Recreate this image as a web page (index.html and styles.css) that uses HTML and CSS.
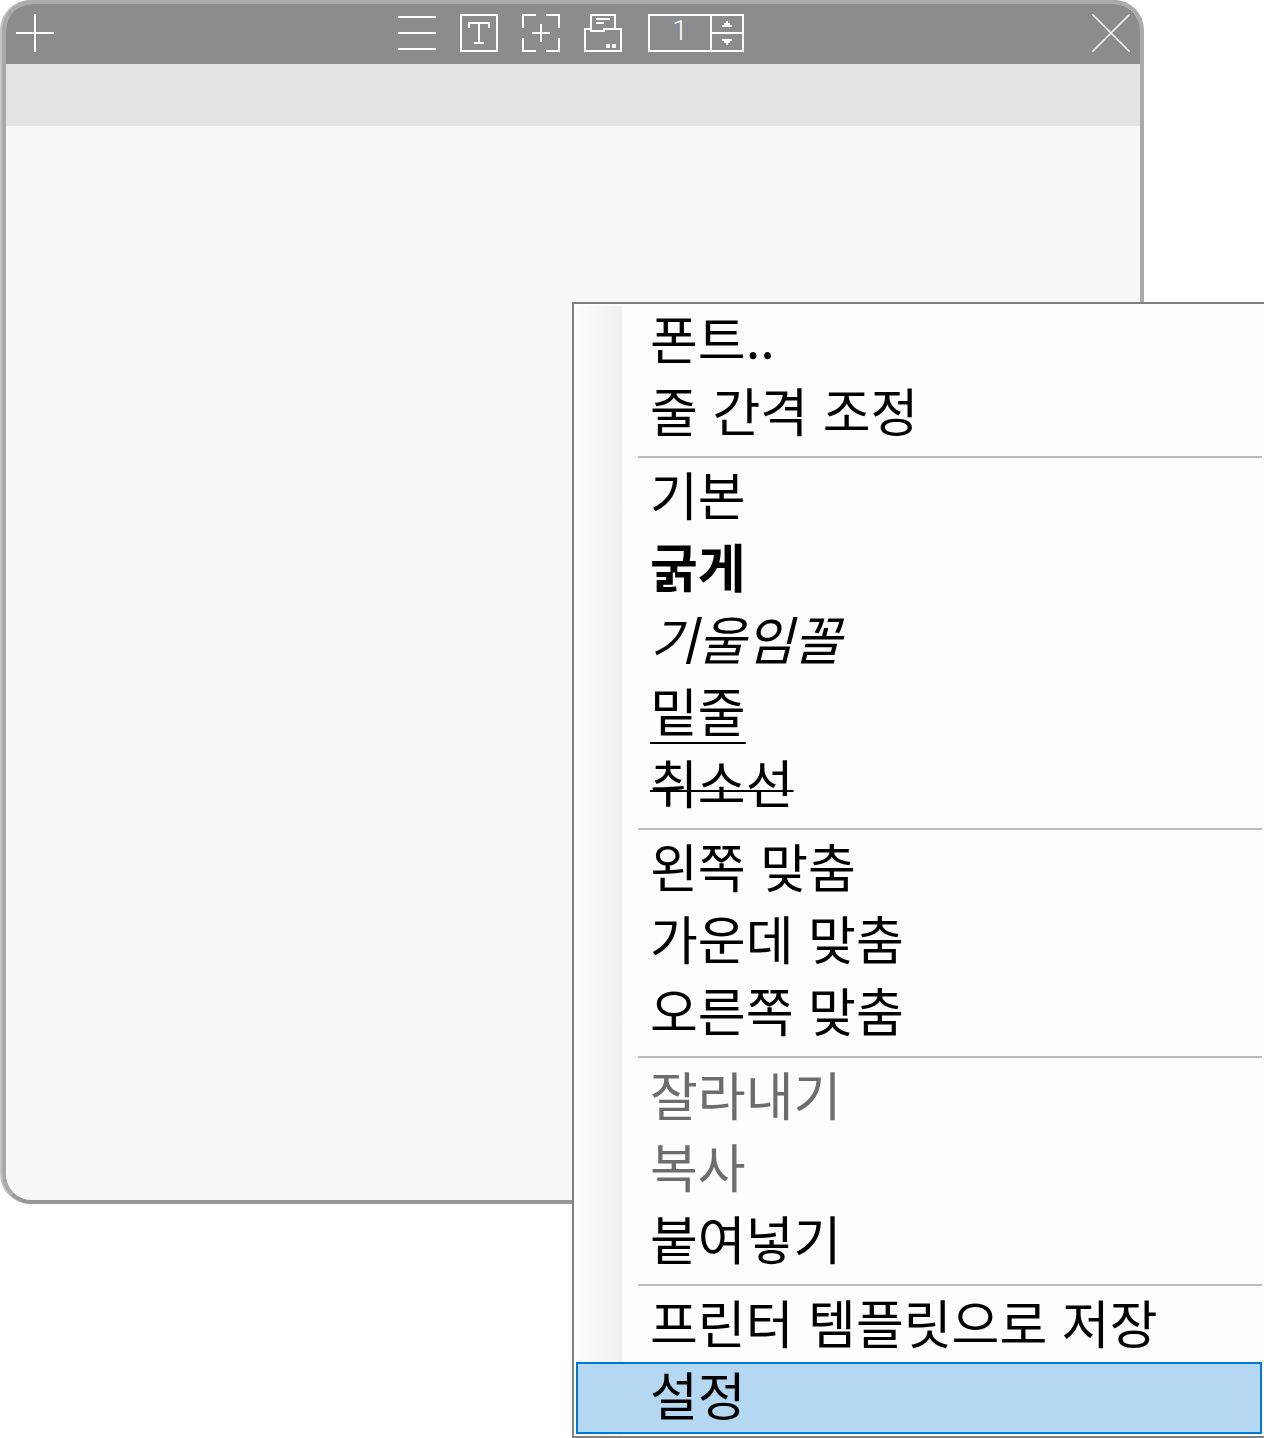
FILE: index.html
```html
<!DOCTYPE html>
<html lang="ko">
<head>
    <meta charset="UTF-8">
    <meta name="viewport" content="width=device-width, initial-scale=1.0">
    <title>메모</title>
    <link rel="stylesheet" href="styles.css">
</head>
<body>
    <div class="desktop">
        <div class="note">
            <div class="toolbar">
                <button class="icon" aria-label="새 메모">
                    <svg viewBox="0 0 38 38"><path d="M0 19H38M19 0V38"/></svg>
                </button>
                <div class="tools">
                    <button class="icon" aria-label="목록">
                        <svg viewBox="0 0 38 38"><path d="M0 3H38M0 19H38M0 35H38"/></svg>
                    </button>
                    <button class="icon" aria-label="글꼴">
                        <svg viewBox="0 0 38 38"><path d="M1 1H37V37H1ZM9 14V9H29V14M19 9V29M14 29H24"/></svg>
                    </button>
                    <button class="icon" aria-label="영역 선택">
                        <svg viewBox="0 0 38 38"><path d="M14 1H1V14M24 1H37V14M1 24V37H14M24 37H37V24M10 19H28M19 10V28"/></svg>
                    </button>
                    <button class="icon" aria-label="인쇄">
                        <svg viewBox="0 0 38 38">
                            <path d="M31 15V1H7V17H20V15H37V37H1V15H7M12 5H26M12 9H20"/>
                            <path class="solid" d="M22 30H26V34H22ZM28 30H32V34H28Z"/>
                        </svg>
                    </button>
                    <div class="spinner">
                        <input type="text" inputmode="numeric" value="1" aria-label="매수">
                        <div class="steps">
                            <button aria-label="증가">
                                <svg viewBox="0 0 10 6"><path class="solid" d="M4 0H6V2H8V4H10V6H0V4H2V2H4Z"/></svg>
                            </button>
                            <button aria-label="감소">
                                <svg viewBox="0 0 10 6"><path class="solid" d="M0 0H10V2H8V4H6V6H4V4H2V2H0Z"/></svg>
                            </button>
                        </div>
                    </div>
                </div>
                <button class="icon" aria-label="닫기">
                    <svg class="close" viewBox="0 0 38 38"><path d="M0 0L38 38M38 0L0 38"/></svg>
                </button>
            </div>
            <div class="titleBar"></div>
            <textarea class="content" aria-label="내용"></textarea>
        </div>
        <!-- 오른쪽 클릭 메뉴 -->
        <ul class="menu">
            <li><button>폰트..</button></li>
            <li><button>줄 간격 조정</button></li>
            <li class="line"></li>
            <li><button>기본</button></li>
            <li><button class="bold">굵게</button></li>
            <li><button class="italic">기울임꼴</button></li>
            <li><button class="underline">밑줄</button></li>
            <li><button class="strike">취소선</button></li>
            <li class="line"></li>
            <li><button>왼쪽 맞춤</button></li>
            <li><button>가운데 맞춤</button></li>
            <li><button>오른쪽 맞춤</button></li>
            <li class="line"></li>
            <li><button disabled>잘라내기</button></li>
            <li><button disabled>복사</button></li>
            <li><button>붙여넣기</button></li>
            <li class="line"></li>
            <li><button>프린터 템플릿으로 저장</button></li>
            <li><button class="selected">설정</button></li>
        </ul>
    </div>
</body>
</html>
```

FILE: styles.css
```css
*{box-sizing: border-box;}
body{margin: 0;background: #fff;font-family: "Noto Sans CJK KR", sans-serif;}
button{margin: 0;padding: 0;border: 0;background: none;font: inherit;color: inherit;}
svg{display: block;fill: none;stroke: #fff;stroke-width: 2;shape-rendering: crispEdges;}
.solid{fill: #fff;stroke: none;}
.close{stroke-width: 1.5;shape-rendering: auto;}

/* 메모와 메뉴가 같은 칸에 겹친다 */
.desktop{display: grid;}
.note{grid-area: 1 / 1;align-self: start;margin: 0 120px 0 2px;border: 4px solid;border-color: #a9abaa #a9abaa #979797 #a9a9a9;border-radius: 30px;box-shadow: -2px 0 0 #c4c4c4;overflow: hidden;background: #f8f8f8;}
.toolbar{display: flex;justify-content: space-between;align-items: center;height: 60px;padding: 0 10px 2px;background: #8b8c8d;}
.icon{width: 38px;height: 38px;}
.tools{display: flex;gap: 24px;padding-right: 4px;}
.spinner{display: flex;width: 96px;height: 38px;margin-left: 2px;border: 2px solid #fff;}
.spinner input{flex: 1;min-width: 0;padding: 0 0 6px;border: 0;background: none;color: #fff;font: 300 28px/28px Roboto, sans-serif;text-align: center;}
.steps{display: flex;flex-direction: column;width: 32px;border-left: 2px solid #fff;}
.steps button{flex: 1;display: flex;align-items: center;justify-content: center;}
.steps button + button{border-top: 2px solid #fff;}
.steps svg{width: 10px;height: 6px;}
.titleBar{height: 62px;background: #e4e4e4;}
.content{display: block;width: 100%;height: 1074px;border: 0;background: #f8f8f8;resize: none;outline: none;}

.menu{grid-area: 1 / 1;z-index: 1;margin: 302px 0 0 572px;padding: 2px;list-style: none;border: 2px solid #808080;border-right: 0;background: #fdfdfd linear-gradient(to right, #fdfdfd, #f0f0f0) no-repeat 2px 2px / 46px 100%;}
.menu button{display: block;width: 100%;height: 72px;padding: 0 0 8px 74px;font-size: 52px;line-height: 64px;text-align: left;white-space: nowrap;color: #000;}
.menu button:disabled{color: #6d6d6d;}
.menu .bold{font-weight: 700;}
.menu .italic{font-style: italic;}
.menu .underline{text-decoration: underline 2px;text-underline-offset: 10px;}
.menu .strike{text-decoration: underline 2px;text-decoration-skip-ink: none;text-underline-offset: -14px;}
.menu .selected{padding-left: 72px;border: 2px solid #0078d7;background: #b4d7f2;line-height: 60px;}
.line{height: 12px;padding: 6px 0 4px 62px;}
.line::before{content: "";display: block;height: 2px;background: #bdbdbd;}
```
